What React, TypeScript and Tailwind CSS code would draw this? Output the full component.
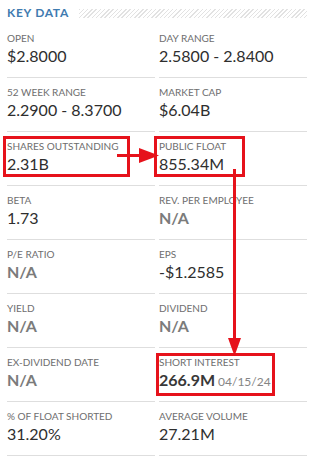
import React from 'react';

type Item = {
  label: string;
  value: string;
  na?: boolean;
  extra?: string;
  strong?: boolean;
};

const ITEMS: Item[] = [
  { label: 'OPEN', value: '$2.8000' },
  { label: 'DAY RANGE', value: '2.5800 - 2.8400' },
  { label: '52 WEEK RANGE', value: '2.2900 - 8.3700' },
  { label: 'MARKET CAP', value: '$6.04B' },
  { label: 'SHARES OUTSTANDING', value: '2.31B' },
  { label: 'PUBLIC FLOAT', value: '855.34M' },
  { label: 'BETA', value: '1.73' },
  { label: 'REV. PER EMPLOYEE', value: 'N/A', na: true },
  { label: 'P/E RATIO', value: 'N/A', na: true },
  { label: 'EPS', value: '-$1.2585' },
  { label: 'YIELD', value: 'N/A', na: true },
  { label: 'DIVIDEND', value: 'N/A', na: true },
  { label: 'EX-DIVIDEND DATE', value: 'N/A', na: true },
  { label: 'SHORT INTEREST', value: '266.9M', extra: '04/15/24', strong: true },
  { label: '% OF FLOAT SHORTED', value: '31.20%' },
  { label: 'AVERAGE VOLUME', value: '27.21M' },
];

const DataCell: React.FC<{ item: Item }> = ({ item }) => (
  <div className="h-[54px] pt-[8px] border-b border-[#dedede]">
    <div className="text-[10px] leading-[12px] text-[#6e6e6e] whitespace-nowrap">{item.label}</div>
    <div className="mt-[2px] flex items-baseline gap-[3px] whitespace-nowrap">
      <span
        className={
          'text-[16px] leading-[20px] ' +
          (item.na ? 'font-bold text-[#7b7b7b]' : item.strong ? 'font-bold text-[#383838]' : 'text-[#2e2e2e]')
        }
      >
        {item.value}
      </span>
      {item.extra && <span className="text-[12px] leading-[14px] text-[#858585]">{item.extra}</span>}
    </div>
  </div>
);

// red annotation boxes + arrows drawn over the table
const Annotations: React.FC = () => (
  <svg className="absolute left-0 top-0 pointer-events-none" width="318" height="466" viewBox="0 0 318 466">
    <g fill="none" stroke="#e6121b" strokeWidth="3">
      <rect x="4.5" y="137.5" width="124" height="38" />
      <rect x="155.5" y="137.5" width="88" height="38" />
      <rect x="157.5" y="354.5" width="116" height="40" />
    </g>
    <g fill="#e6121b">
      <rect x="117" y="154" width="24" height="3" />
      <polygon points="139,148 139,163 159,155.5" />
      <rect x="233" y="169" width="3" height="172" />
      <polygon points="228,338 241,338 234.5,356" />
    </g>
  </svg>
);

const App: React.FC = () => {
  return (
    <div className="relative w-[318px] h-[466px] bg-white overflow-hidden font-['Lato','Liberation_Sans',sans-serif]">
      <div className="h-[24px] pl-[7px] pr-[11px] pt-[6px] flex items-start gap-[10px]">
        <div className="text-[12px] leading-[14px] font-bold tracking-[0.7px] text-[#3f7bb0] whitespace-nowrap">
          KEY DATA
        </div>
        <div className="flex-1 h-[9px] mt-[3px] bg-[repeating-linear-gradient(135deg,#e2e2e2_0px,#e2e2e2_1px,transparent_1px,transparent_3px)]" />
      </div>
      <div className="pl-[7px] pr-[11px] grid grid-cols-2 gap-x-[4px]">
        {ITEMS.map((item) => (
          <DataCell key={item.label} item={item} />
        ))}
      </div>
      <Annotations />
    </div>
  );
};

export default App;
